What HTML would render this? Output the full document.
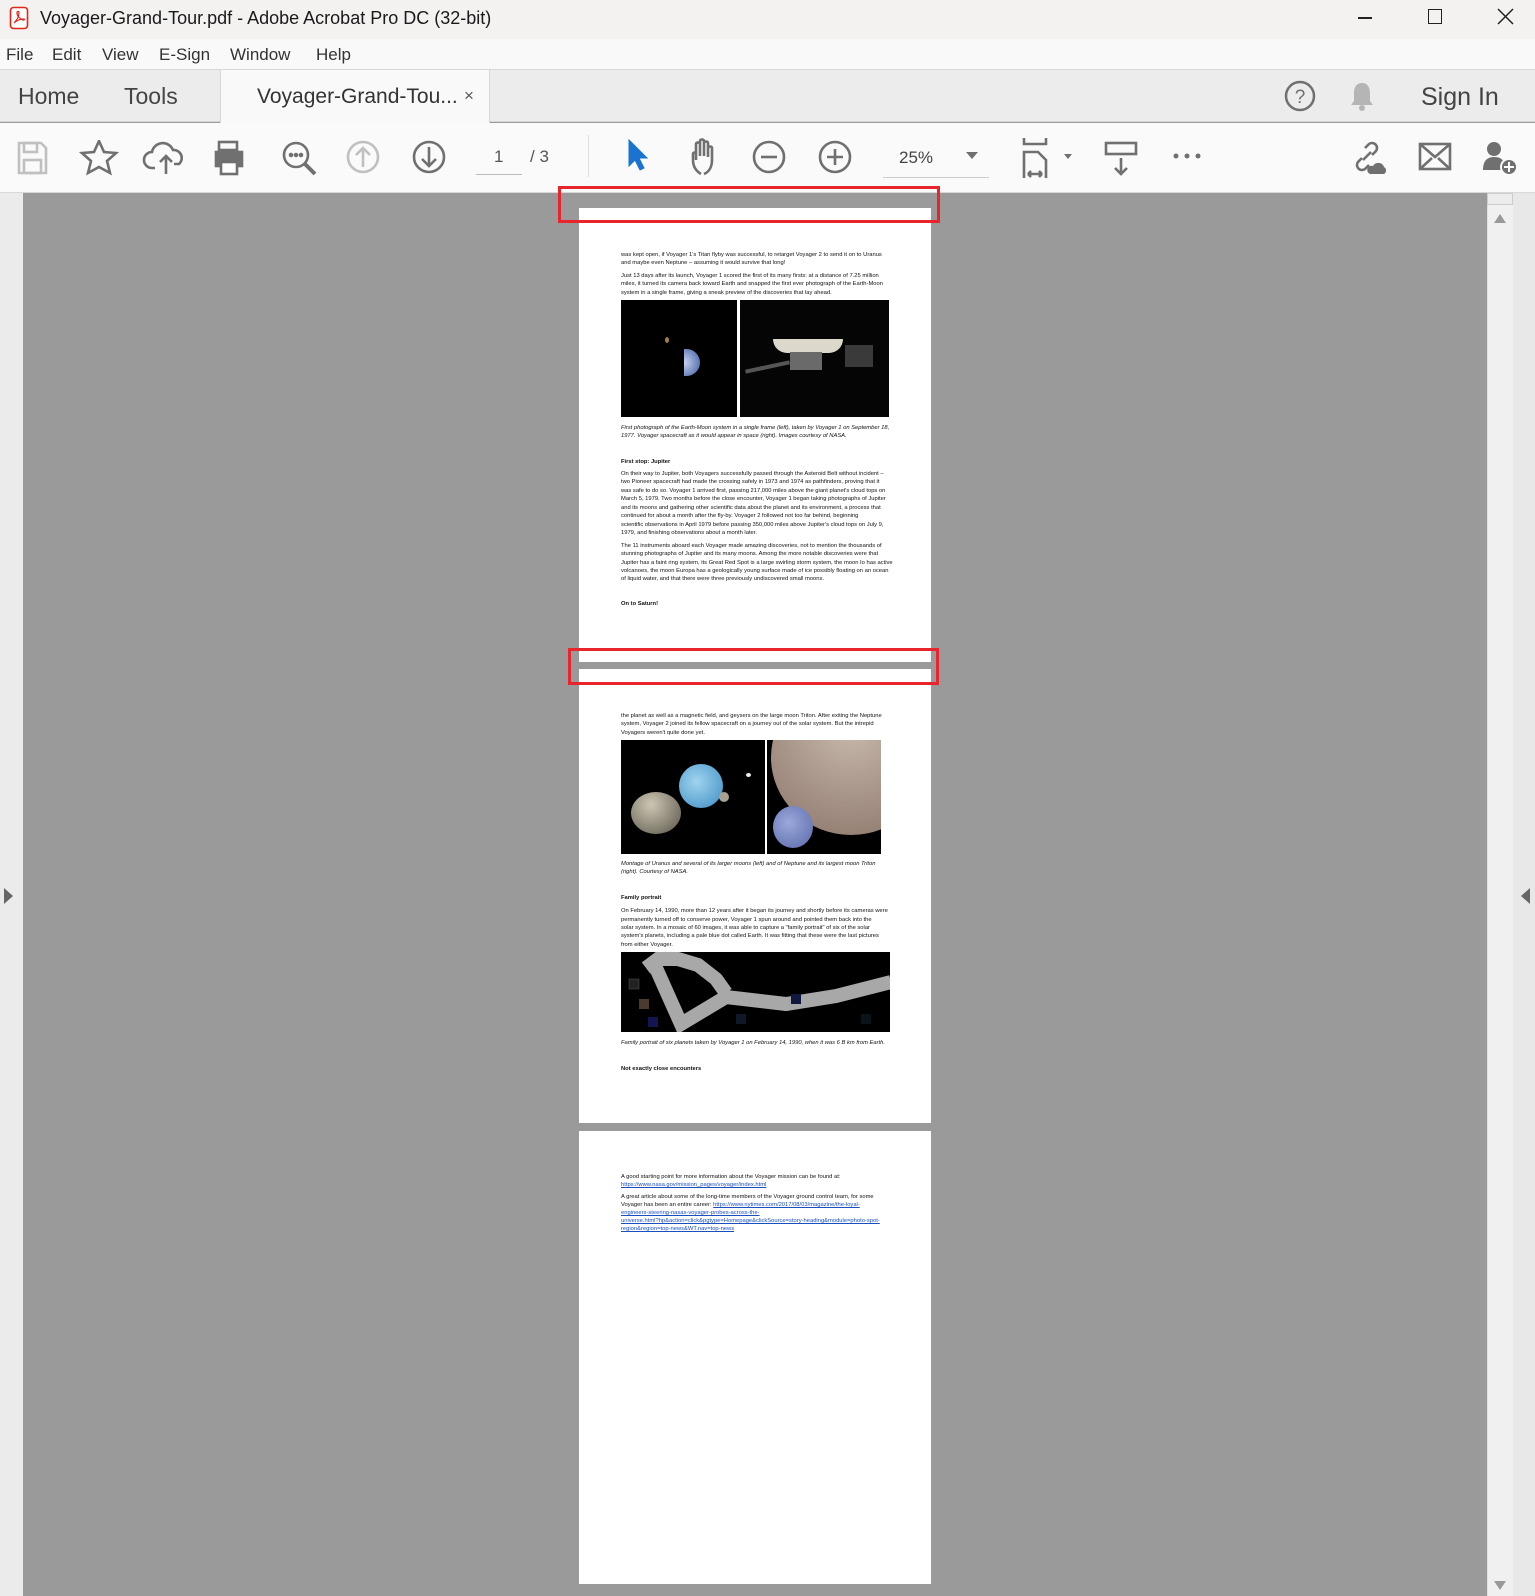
<!DOCTYPE html>
<html><head><meta charset="utf-8"><style>
*{margin:0;padding:0;box-sizing:border-box}
body{width:1535px;height:1596px;overflow:hidden;position:relative;background:#9a9a9a;font-family:"Liberation Sans",sans-serif}
.a{position:absolute}
.t{position:absolute;white-space:nowrap;font-size:5.8px;color:#111;line-height:6px}
.b{font-weight:bold}
.i{font-style:italic}
.l{color:#1a4fc0;text-decoration:underline}
svg{position:absolute}
</style></head><body>
<div class="a" style="left:0;top:0;width:1535px;height:39px;background:#f4f1f1"></div>
<svg style="left:9px;top:6px" width="20" height="24" viewBox="0 0 20 24"><rect x="1.5" y="1.5" width="17" height="21" rx="3" fill="#fff" stroke="#e0251b" stroke-width="1.6"/><path d="M5 17c3-3 5-7 5-10 0-2-2-2-2 0 0 3 3 6 6 7 2 0 2-1 0-1-3 0-7 2-9 4z" fill="none" stroke="#e0251b" stroke-width="1.2"/></svg>
<div class="t" style="left:40px;top:6px;font-size:18px;line-height:24px;color:#1a1a1a">Voyager-Grand-Tour.pdf - Adobe Acrobat Pro DC (32-bit)</div>
<div class="a" style="left:1358px;top:17px;width:14px;height:1.5px;background:#222"></div>
<div class="a" style="left:1428px;top:9px;width:14px;height:15px;border:1.5px solid #222"></div>
<svg style="left:1497px;top:8px" width="17" height="17"><path d="M1 1L16 16M16 1L1 16" stroke="#222" stroke-width="1.5"/></svg>
<div class="a" style="left:0;top:39px;width:1535px;height:31px;background:#f9f9f9;border-bottom:1px solid #d8d8d8"></div>
<div class="t" style="left:6px;top:44px;font-size:17px;line-height:22px;color:#333">File</div>
<div class="t" style="left:52px;top:44px;font-size:17px;line-height:22px;color:#333">Edit</div>
<div class="t" style="left:102px;top:44px;font-size:17px;line-height:22px;color:#333">View</div>
<div class="t" style="left:159px;top:44px;font-size:17px;line-height:22px;color:#333">E-Sign</div>
<div class="t" style="left:230px;top:44px;font-size:17px;line-height:22px;color:#333">Window</div>
<div class="t" style="left:316px;top:44px;font-size:17px;line-height:22px;color:#333">Help</div>
<div class="a" style="left:0;top:70px;width:1535px;height:52px;background:#ececec;border-bottom:1px solid #d6d6d6"></div>
<div class="a" style="left:220px;top:70px;width:270px;height:53px;background:#f9f9f9;border-left:1px solid #d6d6d6;border-right:1px solid #d6d6d6"></div>
<div class="t" style="left:18px;top:82px;font-size:23px;line-height:28px;color:#444">Home</div>
<div class="t" style="left:124px;top:82px;font-size:23px;line-height:28px;color:#444">Tools</div>
<div class="t" style="left:257px;top:84px;font-size:21px;line-height:26px;color:#333">Voyager-Grand-Tou...</div>
<div class="t" style="left:464px;top:85px;font-size:17px;line-height:22px;color:#555">×</div>
<svg style="left:1284px;top:80px" width="32" height="32"><circle cx="16" cy="16" r="14" fill="none" stroke="#707070" stroke-width="2.5"/><text x="16" y="23" font-size="19" text-anchor="middle" fill="#707070" font-family="Liberation Sans">?</text></svg>
<svg style="left:1348px;top:80px" width="28" height="32"><path d="M14 3c-6 0-8 5-8 10v8l-3 4h22l-3-4v-8c0-5-2-10-8-10z" fill="#b5b5b5"/><circle cx="14" cy="28" r="3" fill="#b5b5b5"/></svg>
<div class="t" style="left:1421px;top:82px;font-size:25px;line-height:30px;color:#444">Sign In</div>
<div class="a" style="left:0;top:123px;width:1535px;height:70px;background:#fafafa;border-bottom:1px solid #d8d8d8"></div>
<svg style="left:16px;top:140px" width="700" height="40" fill="none" stroke="#707070" stroke-width="2.6">
<path d="M3 3h22l5 5v25H3z" stroke="#c0c0c0"/><rect x="8" y="3" width="13" height="9" stroke="#c0c0c0"/><rect x="8" y="20" width="17" height="13" stroke="#c0c0c0"/>
<path d="M83 1l5 11 12 1-9 8 3 12-11-6-11 6 3-12-9-8 12-1z"/>
<path d="M139 28h-3a8 8 0 0 1 0-16 11 11 0 0 1 21-2 8 8 0 0 1 6 14h-5M150 34V16m-6 6l6-6 6 6"/>
<rect x="203" y="2" width="18" height="8"/><rect x="200" y="12" width="26" height="14" fill="#707070"/><rect x="205" y="22" width="16" height="12" fill="#fff"/>
<circle cx="280" cy="15" r="12"/><path d="M289 24l10 10" stroke-width="4"/><circle cx="275" cy="15" r="1" fill="#707070"/><circle cx="280" cy="15" r="1" fill="#707070"/><circle cx="285" cy="15" r="1" fill="#707070"/>
<circle cx="347" cy="17" r="15" stroke="#c0c0c0"/><path d="M347 27V8m-7 7l7-7 7 7" stroke="#c0c0c0"/>
<circle cx="413" cy="17" r="15"/><path d="M413 7v19m-7-7l7 7 7-7"/>
</svg>
<div class="a" style="left:476px;top:155px;width:46px;height:20px;border-bottom:1px solid #bbb"></div>
<div class="t" style="left:494px;top:147px;font-size:17px;line-height:20px;color:#555">1</div>
<div class="t" style="left:530px;top:147px;font-size:17px;line-height:20px;color:#555">/ 3</div>
<div class="a" style="left:588px;top:135px;width:1px;height:42px;background:#ddd"></div>
<svg style="left:620px;top:138px" width="600" height="40" fill="none" stroke="#707070" stroke-width="2.6">
<path d="M9 2v26l6-6 5 10 4-2-5-10h8z" fill="#1a73d0" stroke="#1a73d0" stroke-width="1"/>
<path d="M81 36c-5-3-8-8-8-14v-6c0-2 3-2 3 0v6M76 16V6c0-2 4-2 4 0v12M80 18V3c0-2 4-2 4 0v15M84 18V5c0-2 4-2 4 0v14M88 19v-9c0-2 4-2 4 0v12c0 7-3 12-8 14"/>
<circle cx="149" cy="19" r="15"/><path d="M141 19h16"/>
<circle cx="215" cy="19" r="15"/><path d="M207 19h16M215 11v16"/>
</svg>
<div class="t" style="left:899px;top:148px;font-size:17px;line-height:20px;color:#444">25%</div>
<div class="a" style="left:883px;top:177px;width:106px;height:1px;background:#ccc"></div>
<svg style="left:966px;top:152px" width="12" height="8"><path d="M0 0h12L6 7z" fill="#707070"/></svg>
<svg style="left:1020px;top:138px" width="520" height="44" fill="none" stroke="#707070" stroke-width="2.6">
<path d="M4 0v6h22V0M4 40V14h14l8 8v18M8 36h14M8 36l3-3M8 36l3 3M22 36l-3-3M22 36l-3 3"/>
<path d="M44 16h8l-4 5z" fill="#707070" stroke="none"/>
<rect x="86" y="5" width="30" height="11"/><path d="M101 20v16m-6-6l6 6 6-6"/>
<circle cx="156" cy="18" r="2.5" fill="#707070" stroke="none"/><circle cx="167" cy="18" r="2.5" fill="#707070" stroke="none"/><circle cx="178" cy="18" r="2.5" fill="#707070" stroke="none"/>
<path d="M345 10l4-4a5 5 0 0 1 7 7l-4 4M342 20l-4 4a5 5 0 0 0 7 7l4-4M343 22l8-8"/>
<path d="M350 36a4 4 0 0 1 3-8 6 6 0 0 1 11 1 4 4 0 0 1 0 7z" fill="#707070" stroke="none"/>
<rect x="400" y="6" width="30" height="25"/><path d="M400 6l15 13 15-13M400 31l12-11M430 31l-12-11"/>
<circle cx="474" cy="11" r="7" fill="#707070" stroke="none"/><path d="M463 32c0-9 4-13 11-13s9 3 10 6v7z" fill="#707070" stroke="none"/><circle cx="489" cy="29" r="8" fill="#707070" stroke="#fafafa" stroke-width="2"/><path d="M489 24v10M484 29h10" stroke="#fff" stroke-width="2"/>
</svg>
<div class="a" style="left:0;top:193px;width:23px;height:1403px;background:#ebebeb"></div>
<svg style="left:4px;top:888px" width="10" height="16"><path d="M0 0l9 8-9 8z" fill="#666"/></svg>
<div class="a" style="left:1487px;top:193px;width:26px;height:1403px;background:#f0f0f0;border-left:1px solid #ddd"></div>
<div class="a" style="left:1487px;top:193px;width:26px;height:12px;background:#ececec;border:1px solid #ccc"></div>
<svg style="left:1494px;top:214px" width="12" height="9"><path d="M0 9L6 0l6 9z" fill="#999"/></svg>
<svg style="left:1494px;top:1581px" width="12" height="9"><path d="M0 0L6 9l6-9z" fill="#999"/></svg>
<div class="a" style="left:1513px;top:193px;width:22px;height:1403px;background:#e8e8e8"></div>
<svg style="left:1521px;top:888px" width="10" height="16"><path d="M9 0L0 8l9 8z" fill="#666"/></svg>
<div class="a" style="left:579px;top:208px;width:352px;height:454px;background:#fff"></div>
<div class="a" style="left:579px;top:669px;width:352px;height:454px;background:#fff"></div>
<div class="a" style="left:579px;top:1131px;width:352px;height:453px;background:#fff"></div>
<div class="a" style="left:558px;top:186px;width:382px;height:37px;border:3px solid #e8252d"></div>
<div class="a" style="left:568px;top:648px;width:371px;height:37px;border:3px solid #e8252d"></div>
<!-- page 1 -->
<div class="t" style="left:621px;top:252px">was kept open, if Voyager 1's Titan flyby was successful, to retarget Voyager 2 to send it on to Uranus</div>
<div class="t" style="left:621px;top:260px">and maybe even Neptune – assuming it would survive that long!</div>
<div class="t" style="left:621px;top:273px">Just 13 days after its launch, Voyager 1 scored the first of its many firsts:  at a distance of 7.25 million</div>
<div class="t" style="left:621px;top:281px">miles, it turned its camera back toward Earth and snapped the first ever photograph of the Earth-Moon</div>
<div class="t" style="left:621px;top:290px">system in a single frame, giving a sneak preview of the discoveries that lay ahead.</div>
<div class="a" style="left:621px;top:300px;width:116px;height:117px;background:#000"></div>
<div class="a" style="left:665px;top:337px;width:4px;height:6px;border-radius:50%;background:#a08040"></div>
<div class="a" style="left:684px;top:349px;width:16px;height:27px;border-radius:0 14px 14px 0;background:radial-gradient(circle at 0 50%,#c8d4f0,#3c5aa0)"></div>
<div class="a" style="left:740px;top:300px;width:149px;height:117px;background:#050505"></div>
<div class="a" style="left:773px;top:339px;width:70px;height:14px;border-radius:0 0 35px 35px;background:#ddd8cc"></div>
<div class="a" style="left:790px;top:352px;width:32px;height:18px;background:#6a6a6a"></div>
<div class="a" style="left:745px;top:365px;width:45px;height:4px;background:#555;transform:rotate(-12deg)"></div>
<div class="a" style="left:845px;top:345px;width:28px;height:22px;background:#3a3a3a"></div>
<div class="t i" style="left:621px;top:425px">First photograph of the Earth-Moon system in a single frame (left), taken by Voyager 1 on September 18,</div>
<div class="t i" style="left:621px;top:433px">1977.  Voyager spacecraft as it would appear in space (right).  Images courtesy of NASA.</div>
<div class="t b" style="left:621px;top:459px">First stop: Jupiter</div>
<div class="t" style="left:621px;top:471px">On their way to Jupiter, both Voyagers successfully passed through the Asteroid Belt without incident –</div>
<div class="t" style="left:621px;top:479px">two Pioneer spacecraft had made the crossing safely in 1973 and 1974 as pathfinders, proving that it</div>
<div class="t" style="left:621px;top:488px">was safe to do so.  Voyager 1 arrived first, passing 217,000 miles above the giant planet's cloud tops on</div>
<div class="t" style="left:621px;top:496px">March 5, 1979.  Two months before the close encounter, Voyager 1 began taking photographs of Jupiter</div>
<div class="t" style="left:621px;top:505px">and its moons and gathering other scientific data about the planet and its environment, a process that</div>
<div class="t" style="left:621px;top:513px">continued for about a month after the fly-by.  Voyager 2 followed not too far behind, beginning</div>
<div class="t" style="left:621px;top:522px">scientific observations in April 1979 before passing 350,000 miles above Jupiter's cloud tops on July 9,</div>
<div class="t" style="left:621px;top:530px">1979, and finishing observations about a month later.</div>
<div class="t" style="left:621px;top:543px">The 11 instruments aboard each Voyager made amazing discoveries, not to mention the thousands of</div>
<div class="t" style="left:621px;top:551px">stunning photographs of Jupiter and its many moons.  Among the more notable discoveries were that</div>
<div class="t" style="left:621px;top:560px">Jupiter has a faint ring system, its Great Red Spot is a large swirling storm system, the moon Io has active</div>
<div class="t" style="left:621px;top:568px">volcanoes, the moon Europa has a geologically young surface made of ice possibly floating on an ocean</div>
<div class="t" style="left:621px;top:576px">of liquid water, and that there were three previously undiscovered small moons.</div>
<div class="t b" style="left:621px;top:601px">On to Saturn!</div>
<!-- page 2 -->
<div class="t" style="left:621px;top:713px">the planet as well as a magnetic field, and geysers on the large moon Triton.  After exiting the Neptune</div>
<div class="t" style="left:621px;top:721px">system, Voyager 2 joined its fellow spacecraft on a journey out of the solar system.  But the intrepid</div>
<div class="t" style="left:621px;top:730px">Voyagers weren't quite done yet.</div>
<div class="a" style="left:621px;top:740px;width:144px;height:114px;background:#000;overflow:hidden">
 <div class="a" style="left:58px;top:24px;width:44px;height:44px;border-radius:50%;background:radial-gradient(circle at 40% 40%,#9fd4ee,#3d8cc4)"></div>
 <div class="a" style="left:10px;top:52px;width:50px;height:42px;border-radius:50%;background:radial-gradient(circle at 40% 30%,#ccc6b4,#5a5448)"></div>
 <div class="a" style="left:98px;top:52px;width:10px;height:10px;border-radius:50%;background:#a8a090"></div>
 <div class="a" style="left:125px;top:33px;width:5px;height:4px;border-radius:50%;background:#eee"></div>
</div>
<div class="a" style="left:767px;top:740px;width:114px;height:114px;background:#000;overflow:hidden">
 <div class="a" style="left:4px;top:-60px;width:160px;height:155px;border-radius:50%;background:radial-gradient(circle at 50% 30%,#c8b8ac,#8a7468)"></div>
 <div class="a" style="left:6px;top:66px;width:40px;height:42px;border-radius:50%;background:radial-gradient(circle at 40% 40%,#9aa8dc,#5a68a8)"></div>
</div>
<div class="t i" style="left:621px;top:861px">Montage of Uranus and several of its larger moons (left) and of Neptune and its largest moon Triton</div>
<div class="t i" style="left:621px;top:869px">(right).  Courtesy of NASA.</div>
<div class="t b" style="left:621px;top:895px">Family portrait</div>
<div class="t" style="left:621px;top:908px">On February 14, 1990, more than 12 years after it began its journey and shortly before its cameras were</div>
<div class="t" style="left:621px;top:917px">permanently turned off to conserve power, Voyager 1 spun around and pointed them back into the</div>
<div class="t" style="left:621px;top:925px">solar system.  In a mosaic of 60 images, it was able to capture a "family portrait" of six of the solar</div>
<div class="t" style="left:621px;top:933px">system's planets, including a pale blue dot called Earth.  It was fitting that these were the last pictures</div>
<div class="t" style="left:621px;top:942px">from either Voyager.</div>
<div class="a" style="left:621px;top:952px;width:269px;height:80px;background:#000;overflow:hidden">
 <svg width="269" height="80"><path d="M25 16l12-9h20l20 6 18 14 10 14 M35 16l25 56 45-27 60 7 50-8 55-14" fill="none" stroke="#a8a8a8" stroke-width="14"/><rect x="8" y="27" width="10" height="10" fill="#222" stroke="#555" stroke-width=".5"/><rect x="18" y="47" width="10" height="10" fill="#4a3a30"/><rect x="27" y="65" width="10" height="10" fill="#141450"/><rect x="115" y="62" width="10" height="10" fill="#101828"/><rect x="170" y="42" width="10" height="10" fill="#101840"/><rect x="240" y="62" width="10" height="10" fill="#0a1418"/></svg>
</div>
<div class="t i" style="left:621px;top:1040px">Family portrait of six planets taken by Voyager 1 on February 14, 1990, when it was 6 B km from Earth.</div>
<div class="t b" style="left:621px;top:1066px">Not exactly close encounters</div>
<!-- page 3 -->
<div class="t" style="left:621px;top:1174px">A good starting point for more information about the Voyager mission can be found at:</div>
<div class="t l" style="left:621px;top:1182px">https://www.nasa.gov/mission_pages/voyager/index.html</div>
<div class="t" style="left:621px;top:1194px">A great article about some of the long-time members of the Voyager ground control team, for some</div>
<div class="t" style="left:621px;top:1202px">Voyager has been an entire career:  <span class="l">https://www.nytimes.com/2017/08/03/magazine/the-loyal-</span></div>
<div class="t l" style="left:621px;top:1210px">engineers-steering-nasas-voyager-probes-across-the-</div>
<div class="t l" style="left:621px;top:1218px">universe.html?hp&amp;action=click&amp;pgtype=Homepage&amp;clickSource=story-heading&amp;module=photo-spot-</div>
<div class="t l" style="left:621px;top:1226px">region&amp;region=top-news&amp;WT.nav=top-news</div>
</body></html>
